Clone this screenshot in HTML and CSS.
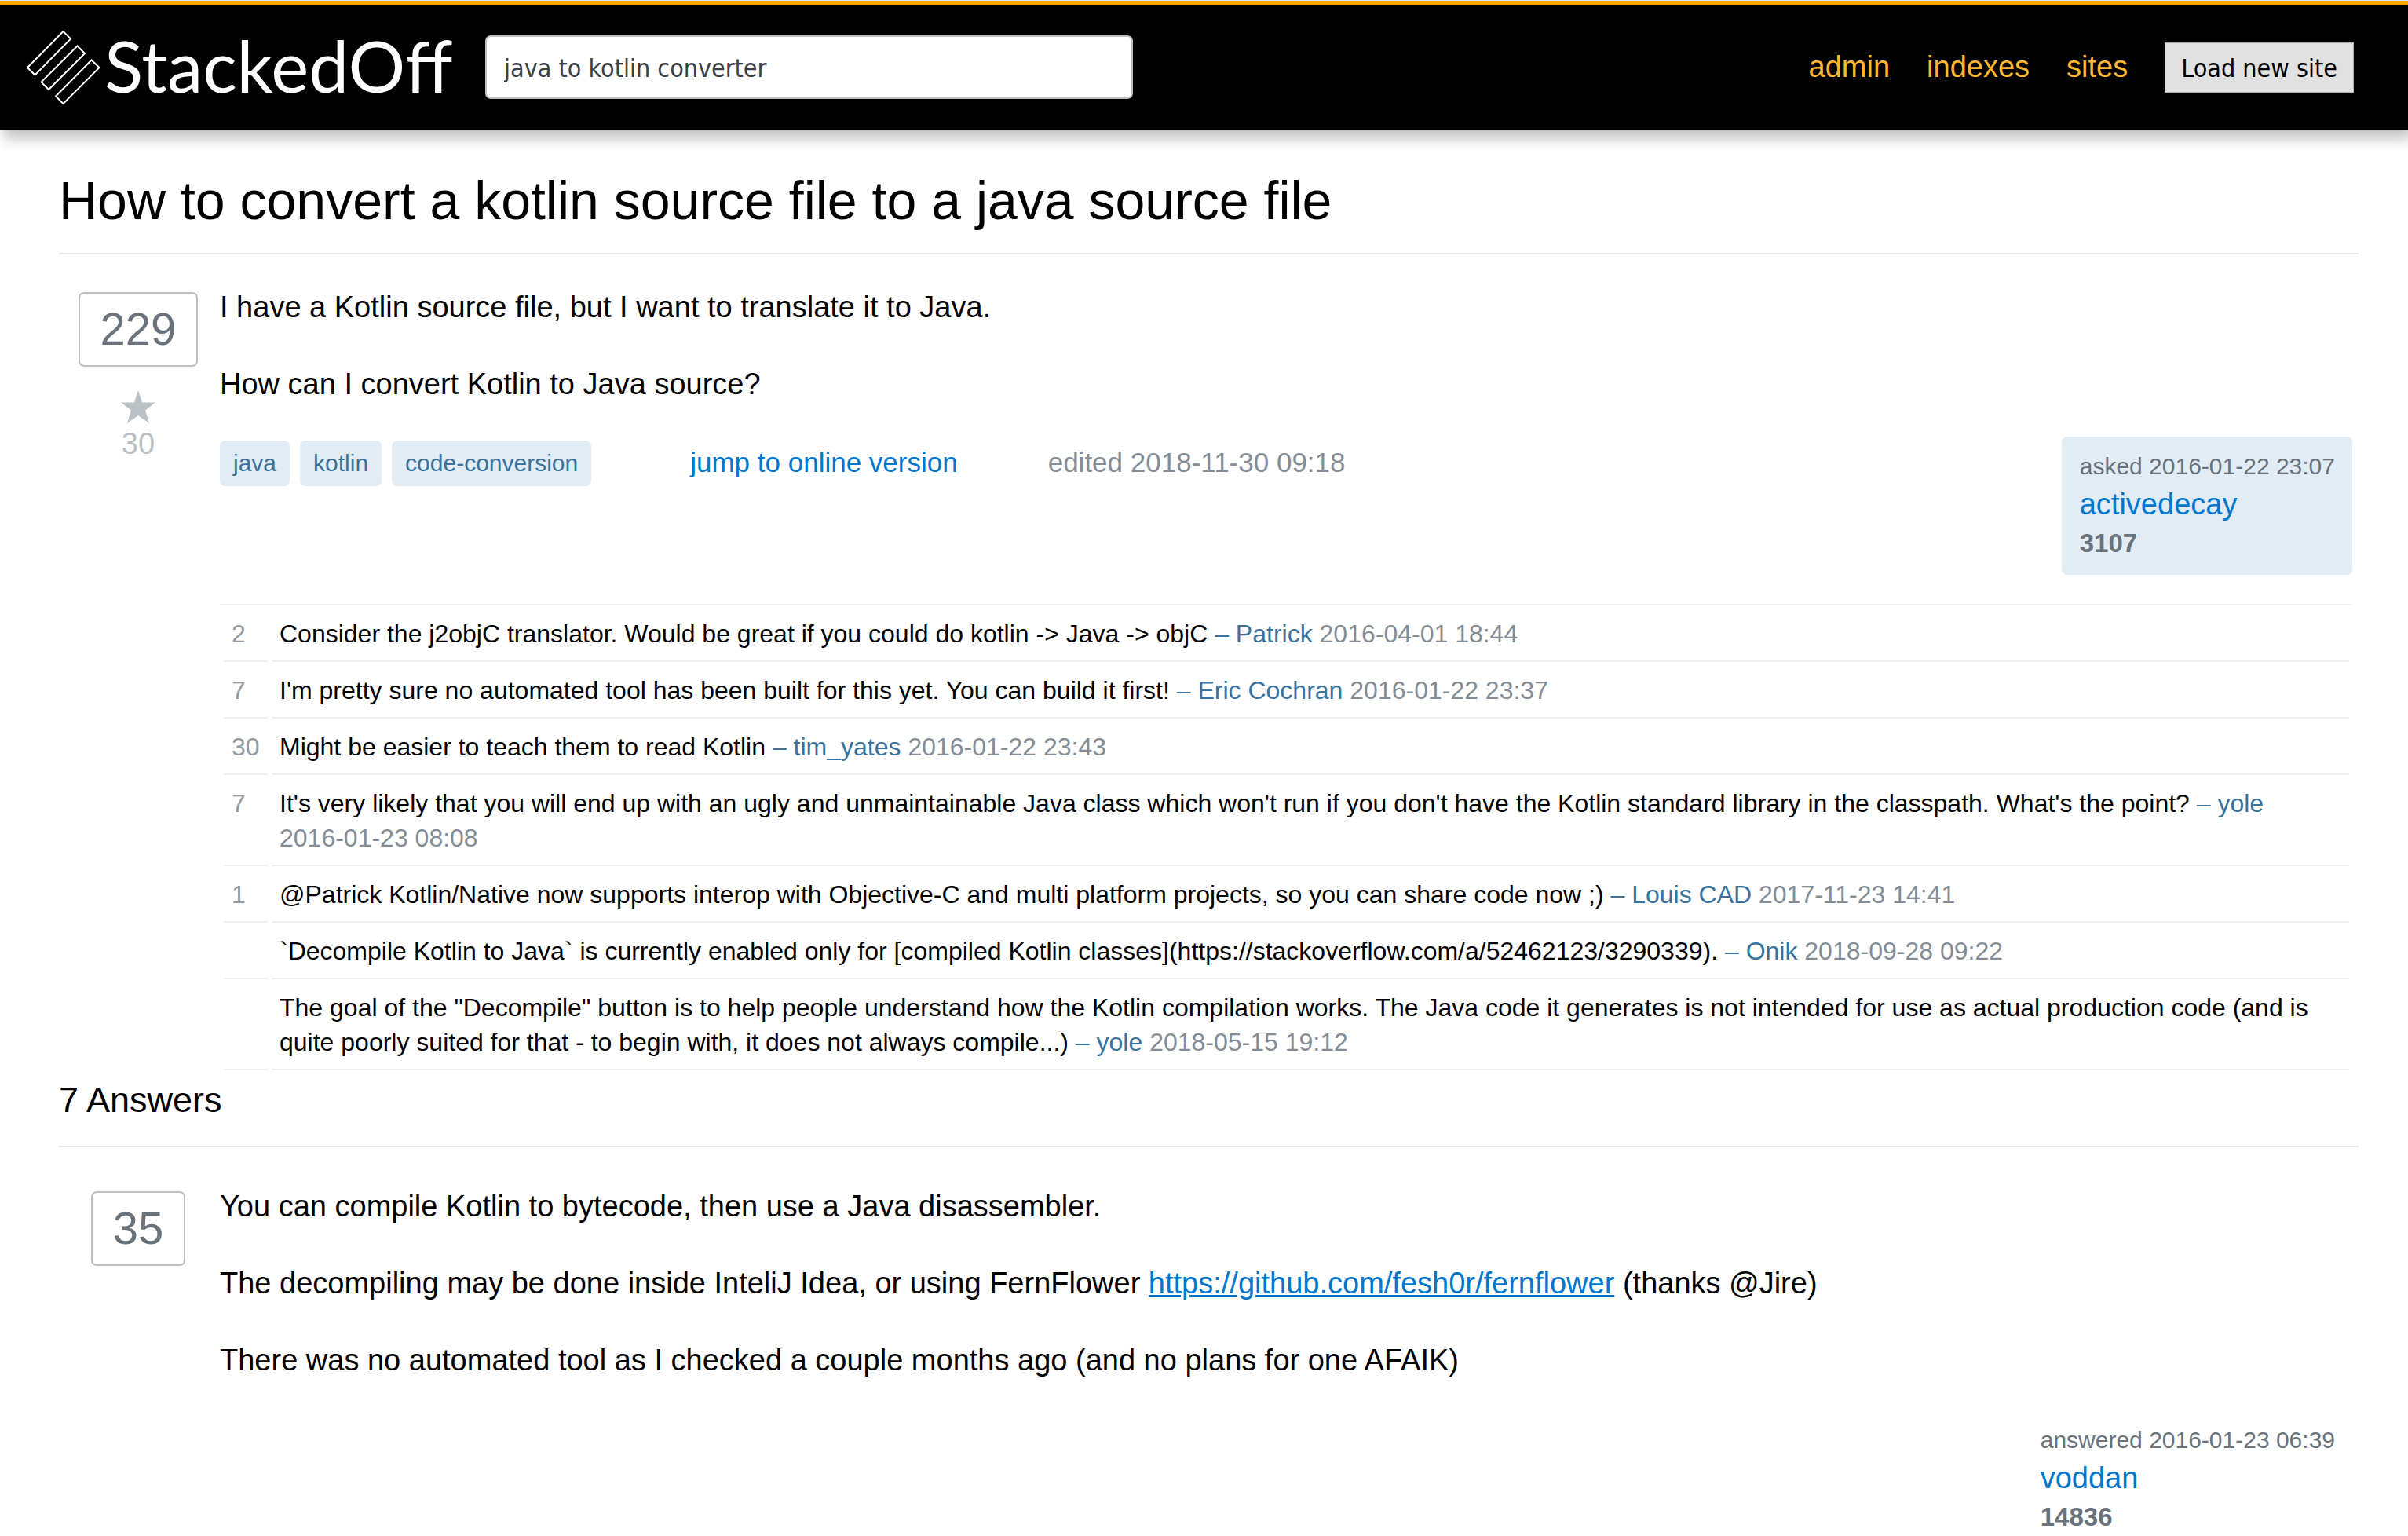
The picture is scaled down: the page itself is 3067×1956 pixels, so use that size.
FILE: index.html
```html
<!DOCTYPE html>
<html lang="en">
<head>
<meta charset="utf-8">
<title>StackedOff</title>
<link rel="stylesheet" href="styles.css">
</head>
<body>
<header class="topbar">
  <a class="logo" href="#" aria-label="StackedOff">
    <svg class="logo-mark" viewBox="0 0 94 94" aria-hidden="true">
      <path d="M46.5 1 56 10.500 10.500 56.500 1 47ZM64.500 19.500 74 29 28 75 18.500 65.500ZM82.500 37.500 92.500 47 46.500 93 37 83.500Z"/>
    </svg>
    <span class="logo-text">StackedOff</span>
  </a>
  <form class="search">
    <input class="search-box" type="text" aria-label="Search" value="java to kotlin converter">
  </form>
  <nav class="nav">
    <a href="#">admin</a>
    <a href="#">indexes</a>
    <a href="#">sites</a>
    <button class="load" type="button">Load new site</button>
  </nav>
</header>
<main class="page">
  <h1 class="title">How to convert a kotlin source file to a java source file</h1>
  <article class="post">
    <div class="votes">
      <div class="score">229</div>
      <svg class="star" viewBox="0 0 44 42" aria-hidden="true"><path d="M22 0 27 15.500H44L31 25.500 36 42 22 32 8 42 13 25.500 0 15.500H17Z"/></svg>
      <div class="favs">30</div>
    </div>
    <div class="body">
      <div class="text">
        <p>I have a Kotlin source file, but I want to translate it to Java.</p>
        <p>How can I convert Kotlin to Java source?</p>
      </div>
      <div class="meta">
        <div class="tags">
          <a class="tag" href="#">java</a>
          <a class="tag" href="#">kotlin</a>
          <a class="tag" href="#">code-conversion</a>
        </div>
        <a class="jump" href="#">jump to online version</a>
        <span class="edited">edited 2018-11-30 09:18</span>
        <div class="user asked">
          <div class="when">asked 2016-01-22 23:07</div>
          <a class="name" href="#">activedecay</a>
          <div class="rep">3107</div>
        </div>
      </div>
      <div class="comments">
        <table class="comment-table">
          <tbody>
            <tr><td class="num">2</td><td>Consider the j2objC translator. Would be great if you could do kotlin -&gt; Java -&gt; objC <a href="#">– Patrick</a> <time>2016-04-01 18:44</time></td></tr>
            <tr><td class="num">7</td><td>I'm pretty sure no automated tool has been built for this yet. You can build it first! <a href="#">– Eric Cochran</a> <time>2016-01-22 23:37</time></td></tr>
            <tr><td class="num">30</td><td>Might be easier to teach them to read Kotlin <a href="#">– tim_yates</a> <time>2016-01-22 23:43</time></td></tr>
            <tr><td class="num">7</td><td>It's very likely that you will end up with an ugly and unmaintainable Java class which won't run if you don't have the Kotlin standard library in the classpath. What's the point? <a href="#">– yole</a> <time>2016-01-23 08:08</time></td></tr>
            <tr><td class="num">1</td><td>@Patrick Kotlin/Native now supports interop with Objective-C and multi platform projects, so you can share code now ;) <a href="#">– Louis CAD</a> <time>2017-11-23 14:41</time></td></tr>
            <tr><td class="num"></td><td>`Decompile Kotlin to Java` is currently enabled only for [compiled Kotlin classes](https://stackoverflow.com/a/52462123/3290339). <a href="#">– Onik</a> <time>2018-09-28 09:22</time></td></tr>
            <tr><td class="num"></td><td>The goal of the "Decompile" button is to help people understand how the Kotlin compilation works. The Java code it generates is not intended for use as actual production code (and is quite poorly suited for that - to begin with, it does not always compile...) <a href="#">– yole</a> <time>2018-05-15 19:12</time></td></tr>
          </tbody>
        </table>
      </div>
    </div>
  </article>
  <h2 class="answers-title">7 Answers</h2>
  <article class="post answer">
    <div class="votes">
      <div class="score">35</div>
    </div>
    <div class="body">
      <div class="text">
        <p>You can compile Kotlin to bytecode, then use a Java disassembler.</p>
        <p>The decompiling may be done inside InteliJ Idea, or using FernFlower <a href="#">https://github.com/fesh0r/fernflower</a> (thanks @Jire)</p>
        <p>There was no automated tool as I checked a couple months ago (and no plans for one AFAIK)</p>
      </div>
      <div class="meta">
        <div class="user">
          <div class="when">answered 2016-01-23 06:39</div>
          <a class="name" href="#">voddan</a>
          <div class="rep">14836</div>
        </div>
      </div>
    </div>
  </article>
</main>
</body>
</html>
```
FILE: styles.css
```css
* {
  box-sizing: border-box;
}

body {
  margin: 0;
  background: #fff;
  color: #000;
  font: 38px/49px "Liberation Sans", Arial, sans-serif;
  border-top: 1px solid #e4e6e8;
}

a {
  color: #0077cc;
  text-decoration: none;
}

h1, h2, p {
  margin: 0;
  font-weight: normal;
}

.topbar {
  display: flex;
  align-items: center;
  height: 164px;
  padding: 0 69px 0 34px;
  border-top: 5px solid #ffa500;
  background: #000;
  box-shadow: 5px 12px 16px rgba(0, 0, 0, 0.24);
}

.logo {
  display: flex;
  align-items: center;
  gap: 5px;
  width: 584px;
  color: #fff;
}

.logo-mark {
  flex: none;
  width: 94px;
  height: 94px;
  fill: none;
  stroke: #fff;
  stroke-width: 2;
}

.logo-text {
  padding-bottom: 6px;
  font: 91px/96px Lato, sans-serif;
}

.search-box {
  display: block;
  width: 825px;
  height: 81px;
  padding: 2px 22px 0;
  border: 2px solid #bbc0c4;
  border-radius: 7px;
  background: #fff;
  color: #3b4045;
  font: 32px "DejaVu Sans Condensed", "DejaVu Sans", sans-serif;
}

.nav {
  display: flex;
  align-items: center;
  gap: 47px;
  margin-left: auto;
}

.nav a {
  color: #ffb732;
}

.load {
  height: 64px;
  padding: 2px 20px 0;
  border: 1px solid #adadad;
  background: #e1e1e1;
  color: #000;
  font: 32px "DejaVu Sans Condensed", "DejaVu Sans", sans-serif;
}

.page {
  padding: 50px 63px 0 75px;
}

.title {
  padding-bottom: 27px;
  border-bottom: 2px solid #e4e6e8;
  font-size: 68px;
  line-height: 80px;
}

.post {
  display: grid;
  grid-template-columns: 205px 1fr;
  padding: 43px 8px 0 0;
}

.answer {
  padding-top: 51px;
}

.votes {
  display: flex;
  flex-direction: column;
  align-items: center;
  padding: 5px 3px 0 0;
  color: #bbc0c4;
}

.score {
  height: 95px;
  padding: 0 26px;
  border: 2px solid #bbc0c4;
  border-radius: 7px;
  color: #6a737c;
  font-size: 58px;
  line-height: 89px;
}

.star {
  width: 44px;
  height: 42px;
  margin: 30px 0 2px;
  fill: #bbc0c4;
}

.text {
  display: flex;
  flex-direction: column;
  gap: 49px;
}

.text a {
  text-decoration: underline;
}

.meta {
  display: flex;
  align-items: flex-start;
  padding-top: 42px;
  font-size: 35px;
}

.answer .meta {
  padding-top: 39px;
}

.tags {
  display: flex;
  gap: 13px;
  margin: 5px 126px 0 0;
}

.tag {
  padding: 0 17px;
  border-radius: 7px;
  background: #e1ecf4;
  color: #39739d;
  font-size: 30px;
  line-height: 58px;
}

.jump, .edited {
  margin-top: 8px;
}

.edited {
  margin-left: 115px;
  color: #848d95;
}

.user {
  margin-left: auto;
  padding: 14px 22px 5px 23px;
  border-radius: 7px;
  color: #6a737c;
}

.asked {
  background: #e1ecf4;
}

.when {
  font-size: 30px;
  line-height: 48px;
}

.name {
  display: block;
  font-size: 38px;
}

.rep {
  padding-bottom: 11px;
  font-size: 33px;
  font-weight: bold;
}

.comments {
  margin-top: 37px;
  border-top: 2px solid #eff0f1;
}

.comment-table {
  width: 100%;
  border-spacing: 5px 0;
  font-size: 32px;
  line-height: 44px;
}

.comment-table td {
  padding: 14px 10px 12px;
  border-bottom: 2px solid #eff0f1;
  vertical-align: top;
}

.comment-table .num {
  width: 56px;
  color: #9199a1;
}

.comment-table a {
  color: #39739d;
}

.comment-table time {
  color: #848d95;
  white-space: nowrap;
}

.answers-title {
  padding: 10px 0 31px;
  border-bottom: 2px solid #e4e6e8;
  font-size: 45px;
  line-height: 55px;
}
```
